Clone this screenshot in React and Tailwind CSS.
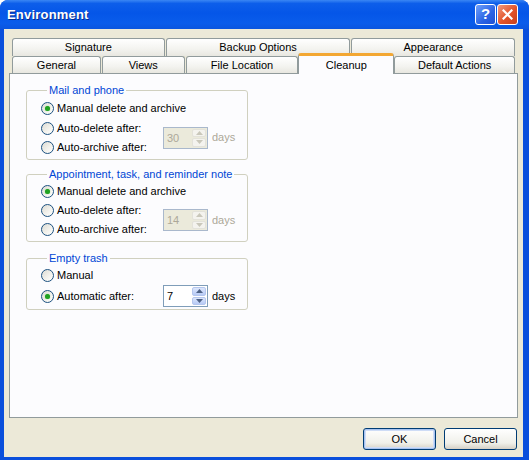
import React from 'react';

const font = "font-['Liberation_Sans',Arial,sans-serif]";

function Radio({ checked, label, h = 'h-[20px]' }) {
  return (
    <label className={`flex items-center ${h} text-[11px] text-black`}>
      <span className="w-[13px] h-[13px] rounded-full border border-[#1C5180] bg-[linear-gradient(135deg,#DCDBD3_0%,#F4F3EE_60%,#FFFFFF_100%)] flex items-center justify-center">
        {checked && <span className="w-[5px] h-[5px] rounded-full bg-[#21A121] shadow-[0_0_1px_#5DD35D]" />}
      </span>
      <span className="ml-[3px]">{label}</span>
    </label>
  );
}

function Arrow({ up, color }) {
  return (
    <svg width="7" height="4" viewBox="0 0 7 4">
      <path d={up ? 'M0 4 L3.5 0 L7 4 Z' : 'M0 0 L3.5 4 L7 0 Z'} fill={color} />
    </svg>
  );
}

function Spin({ value, disabled }) {
  const arrow = disabled ? '#C9C7BA' : '#4D6185';
  const btn = disabled
    ? 'bg-[#F4F3EE] border border-[#E3E2DA]'
    : 'bg-[linear-gradient(to_bottom,#DCE6FC,#B7CAF5)] border border-[#B4C6EE]';
  return (
    <div className="flex items-center">
      <div
        className={`flex w-[45px] h-[22px] border ${
          disabled ? 'border-[#A9B8CC] bg-[#EBEADB]' : 'border-[#7F9DB9] bg-white'
        }`}
      >
        <span className={`flex-1 pl-[3px] pt-[2px] text-[11px] ${disabled ? 'text-[#ACA899]' : 'text-black'}`}>
          {value}
        </span>
        <div className="flex flex-col w-[16px] p-px gap-px">
          <div className={`flex-1 rounded-[2px] flex items-center justify-center ${btn}`}>
            <Arrow up color={arrow} />
          </div>
          <div className={`flex-1 rounded-[2px] flex items-center justify-center ${btn}`}>
            <Arrow color={arrow} />
          </div>
        </div>
      </div>
      <span className={`ml-[4px] text-[11px] ${disabled ? 'text-[#ACA899]' : 'text-black'}`}>days</span>
    </div>
  );
}

function Group({ title, className, children }) {
  return (
    <fieldset className={`relative w-[222px] border border-[#D0D0BF] rounded-[3px] pl-[14px] ${className}`}>
      <legend className="ml-[6px] px-[2px] text-[11px] leading-[13px] text-[#0046D5]">{title}</legend>
      {children}
    </fieldset>
  );
}

function Tab({ label, w, className = '' }) {
  return (
    <div
      className={`flex items-center justify-center ${w} border border-b-0 border-[#919B9C] rounded-t-[3px] bg-[linear-gradient(to_bottom,#FFFFFF,#F3F3EF_60%,#E8E7E0)] text-[11px] text-black ${className}`}
    >
      {label}
    </div>
  );
}

function XpButton({ label, def }) {
  return (
    <button
      className={`w-[73px] h-[22px] rounded-[3px] border border-[#003C74] bg-[linear-gradient(to_bottom,#FFFFFF,#F0F0EA_70%,#D6D0C5)] text-[11px] text-black ${
        def ? 'shadow-[inset_0_0_0_1px_#A8C3F0,inset_0_0_0_2px_#CEDCF6]' : ''
      }`}
    >
      {label}
    </button>
  );
}

function Cleanup() {
  return (
    <div className="pt-[10px] pl-[16px]">
      <Group title="Mail and phone" className="h-[76px]">
        <div className="mt-[1px]">
          <Radio checked label="Manual delete and archive" />
          <div className="flex items-center">
            <div className="w-[122px]">
              <Radio label="Auto-delete after:" />
              <Radio label="Auto-archive after:" h="h-[19px]" />
            </div>
            <Spin value="30" disabled />
          </div>
        </div>
      </Group>
      <Group title="Appointment, task, and reminder note" className="h-[74px] mt-[8px]">
        <div className="mt-[1px]">
          <Radio checked label="Manual delete and archive" h="h-[19px]" />
          <div className="flex items-center">
            <div className="w-[122px]">
              <Radio label="Auto-delete after:" h="h-[19px]" />
              <Radio label="Auto-archive after:" h="h-[19px]" />
            </div>
            <Spin value="14" disabled />
          </div>
        </div>
      </Group>
      <Group title="Empty trash" className="h-[58px] mt-[10px]">
        <div>
          <Radio label="Manual" />
          <div className="flex items-center">
            <div className="w-[122px]">
              <Radio checked label="Automatic after:" />
            </div>
            <Spin value="7" />
          </div>
        </div>
      </Group>
    </div>
  );
}

export default function App() {
  return (
    <div className={`w-[529px] h-[460px] flex flex-col bg-[#0A4FDC] rounded-t-[8px] overflow-hidden ${font}`}>
      {/* Title bar */}
      <div className="h-[29px] shrink-0 flex items-center px-[7px] bg-[linear-gradient(to_bottom,#3A86F4_0%,#0D5EEA_12%,#0556E8_45%,#0A5CEB_80%,#0A55DF_100%)]">
        <span className="text-white font-bold text-[13px] tracking-[0.2px] [text-shadow:1px_1px_0_#0A2C8C]">
          Environment
        </span>
        <div className="ml-auto flex gap-[1px] mr-[4px]">
          <div className="w-[21px] h-[21px] rounded-[3px] border border-white bg-[linear-gradient(135deg,#6FA0FB,#2A63E4_60%,#1E50D4)] flex items-center justify-center text-white font-bold text-[15px]">
            ?
          </div>
          <div className="w-[21px] h-[21px] rounded-[3px] border border-white bg-[linear-gradient(135deg,#F19A7E,#E2532A_55%,#C6401C)] flex items-center justify-center">
            <svg width="11" height="11" viewBox="0 0 11 11">
              <path d="M1.5 1.5 L9.5 9.5 M9.5 1.5 L1.5 9.5" stroke="white" strokeWidth="2.2" strokeLinecap="square" />
            </svg>
          </div>
        </div>
      </div>

      {/* Body */}
      <div className="flex-1 flex flex-col ml-[4px] mr-[6px] mb-[3px] bg-[#ECE9D8] px-[5px] pt-[9px] pb-[7px]">
        {/* Tabs */}
        <div className="pl-[3px] pr-[3px]">
          <div className="flex h-[18px]">
            <Tab label="Signature" w="w-[153px]" />
            <Tab label="Backup Options" w="w-[185px]" className="ml-px" />
            <Tab label="Appearance" w="w-[164px]" className="ml-px" />
          </div>
          <div className="flex h-[17px] items-end">
            <Tab label="General" w="w-[89px]" className="h-[17px]" />
            <Tab label="Views" w="w-[83px]" className="h-[17px] ml-px" />
            <Tab label="File Location" w="w-[113px]" className="h-[17px] ml-px" />
            <div className="relative z-10 -mb-px h-[21px] w-[96px] flex items-center justify-center border border-b-0 border-[#919B9C] border-t-[3px] border-t-[#F3A732] rounded-t-[3px] bg-[#FCFCFE] text-[11px] text-black">
              Cleanup
            </div>
            <Tab label="Default Actions" w="w-[121px]" className="h-[17px]" />
          </div>
        </div>

        {/* Panel */}
        <div className="h-[345px] border border-[#919B9C] bg-[#FCFCFE]">
          <Cleanup />
        </div>

        {/* Buttons */}
        <div className="mt-[10px] flex justify-end gap-[8px] pr-[1px]">
          <XpButton label="OK" def />
          <XpButton label="Cancel" />
        </div>
      </div>
    </div>
  );
}
